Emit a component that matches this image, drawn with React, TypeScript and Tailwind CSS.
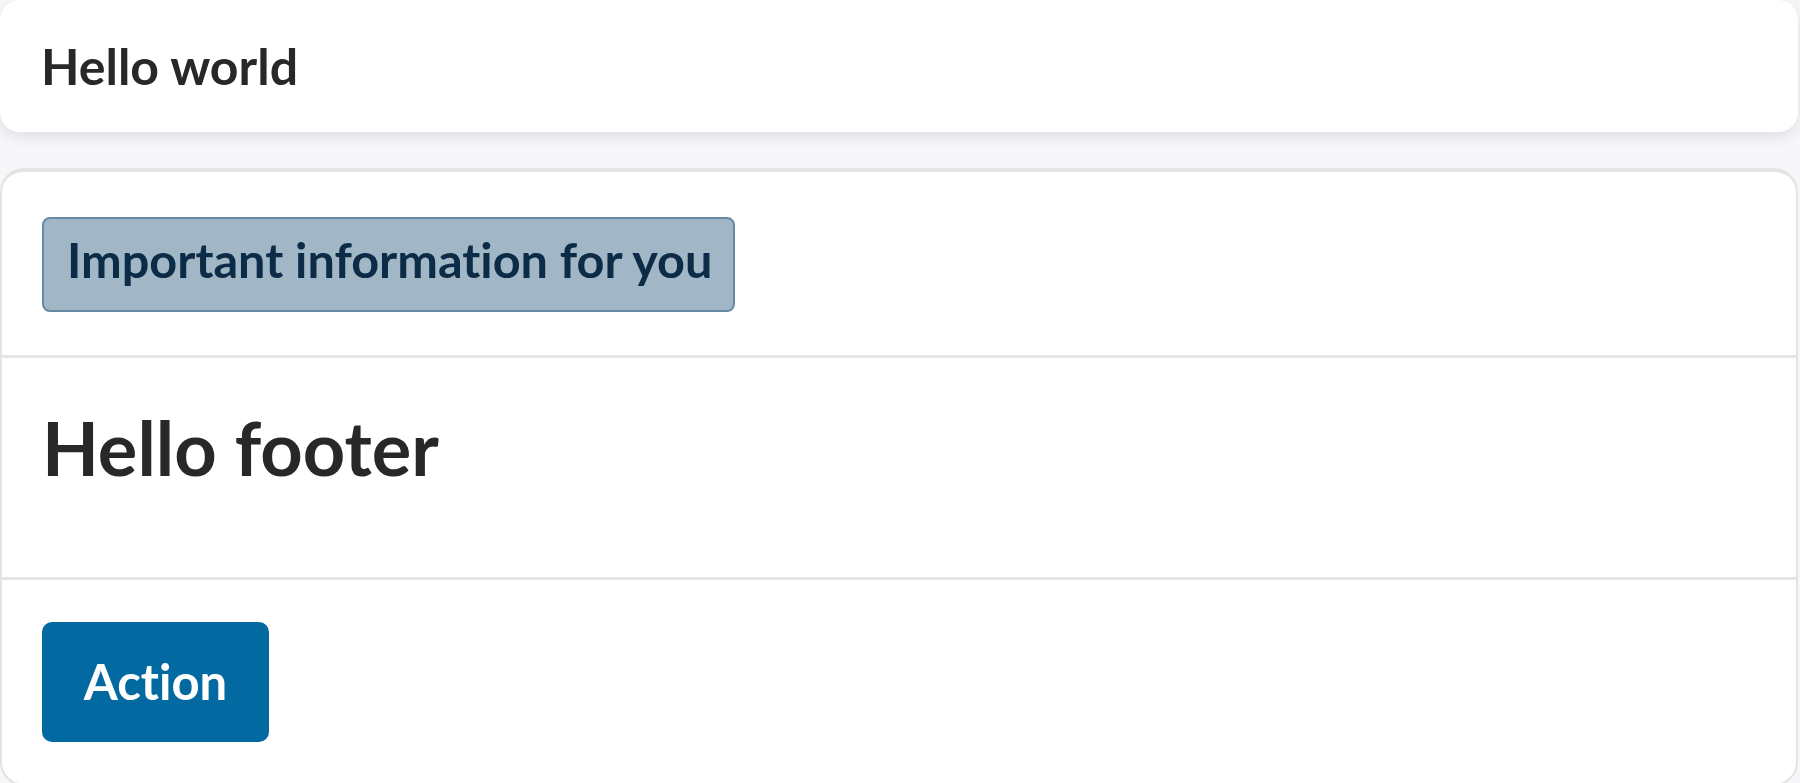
import React from "react";

export default function App() {
  return (
    <div className="min-h-screen bg-[#f7f7f9] pr-[2px] font-['Lato','Noto_Sans',sans-serif] text-[#28282b] [font-variant-ligatures:none]">
      <div className="h-[132px] bg-white rounded-[20px] shadow-[0_5px_14px_rgba(30,30,60,0.10)] flex items-center px-[41px]">
        <h1 className="text-[50px] font-bold leading-normal">Hello world</h1>
      </div>
      <div className="mt-[36px] bg-white rounded-[24px] border-x-2 border-b-2 border-t-4 border-[#e4e4e7] overflow-hidden">
        <div className="px-[40px] pt-[45px] pb-[43px] flex">
          <div className="inline-flex border-2 border-[#658aa4] bg-[#a1b7c6] rounded-[8px] pl-[23px] pr-[21px] pt-[16px] pb-[27px]">
            <span className="text-[48.6px] leading-[48px] font-bold text-[#0b2b47]">Important information for you</span>
          </div>
        </div>
        <div className="border-t-[3px] border-[#e5e5e7] px-[40px] pt-[34px] pb-[74px]">
          <h2 className="text-[74px] font-bold leading-normal">Hello footer</h2>
        </div>
        <div className="border-t-[3px] border-[#e5e5e7] px-[40px] pt-[42px] pb-[42px]">
          <button className="w-[227px] h-[120px] rounded-[10px] bg-[#0369a1] text-white text-[49px] font-bold flex items-center justify-center leading-normal">
            Action
          </button>
        </div>
      </div>
    </div>
  );
}
